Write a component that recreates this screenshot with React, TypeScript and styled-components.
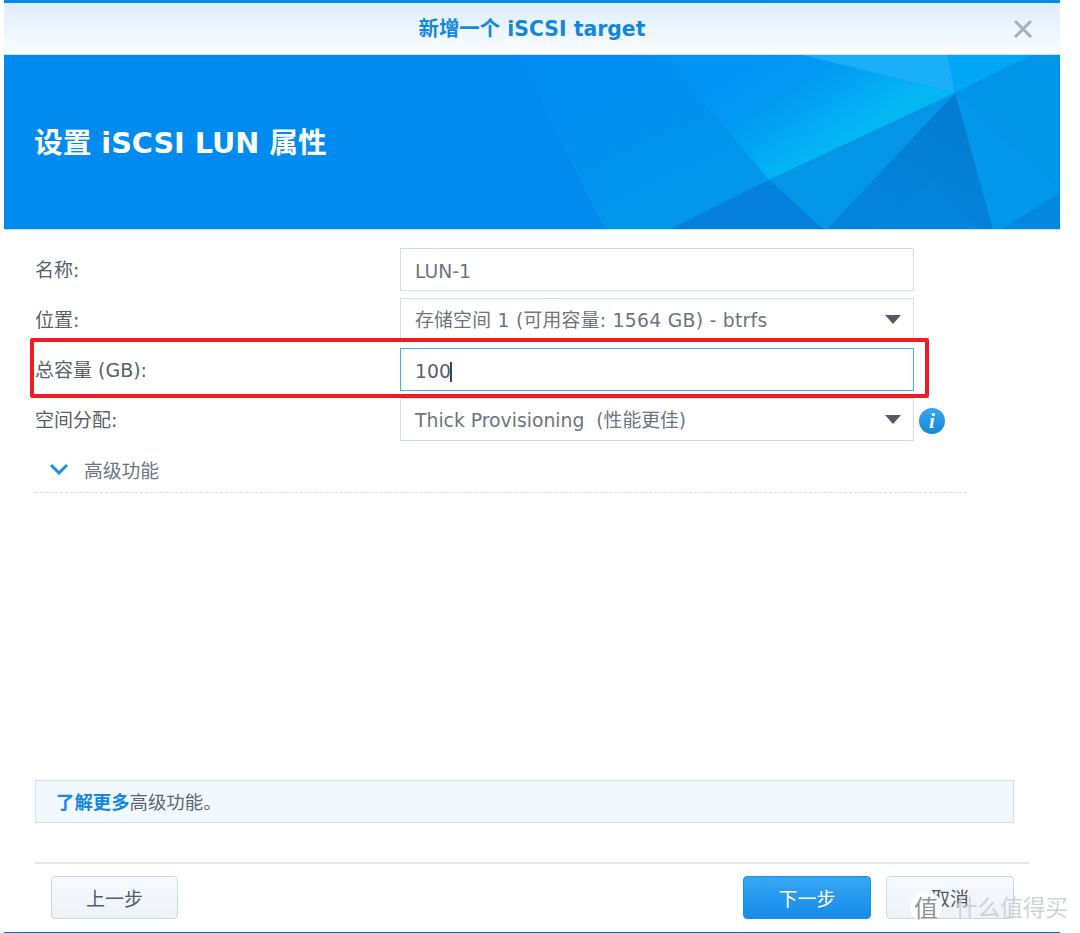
import { FC } from "react";
import styled, { createGlobalStyle } from "styled-components";

const GlobalStyle = createGlobalStyle`
  html, body {
    margin: 0;
    padding: 0;
    background: #ffffff;
  }
  body {
    font-family: "DejaVu Sans", "Noto Sans CJK SC", sans-serif;
  }
`;

const Page = styled.div`
  position: relative;
  width: 1080px;
  height: 933px;
  overflow: hidden;
  background: #ffffff;
`;

const Window = styled.div`
  box-sizing: border-box;
  width: 1056px;
  height: 933px;
  margin-left: 4px;
  display: flex;
  flex-direction: column;
  border-top: 3px solid #0a8ae6;
  border-bottom: 1px solid #2a5caa;
`;

const TitleBar = styled.header`
  flex: none;
  box-sizing: border-box;
  height: 52px;
  display: flex;
  align-items: center;
  justify-content: center;
  position: relative;
  padding-bottom: 3px;
  background: linear-gradient(#dcedfb, #fbfdff);
  border-bottom: 1px solid #cfe3f3;
`;

const WindowTitle = styled.h1`
  margin: 0;
  font-size: 20.4px;
  font-weight: 700;
  color: #1287dd;
`;

const CloseButton = styled.button`
  position: absolute;
  right: 27px;
  top: 16px;
  width: 20px;
  height: 20px;
  padding: 0;
  border: 0;
  background: none;
  display: block;
`;

const Banner = styled.section`
  flex: none;
  position: relative;
  box-sizing: border-box;
  height: 175px;
  display: flex;
  align-items: center;
  padding: 0 0 3px 30px;
  background: #018bef;
  border-bottom: 1px solid #bfe3fb;
  overflow: hidden;
`;

const BannerArt = styled.svg`
  position: absolute;
  right: 0;
  top: 0;
  width: 1056px;
  height: 174px;
`;

const BannerTitle = styled.h2`
  position: relative;
  margin: 0;
  font-size: 28.7px;
  font-weight: 700;
  color: #ffffff;
`;

const Body = styled.main`
  flex: 1;
  display: flex;
  flex-direction: column;
  padding: 18px 0 0 31px;
  min-height: 0;
`;

const Row = styled.div`
  display: flex;
  align-items: center;
  height: 43px;
  margin-bottom: 7px;
`;

const Label = styled.label`
  width: 365px;
  flex: none;
  padding-bottom: 2px;
  font-size: 19px;
  color: #56616c;
`;

const Field = styled.div<{ $focused?: boolean }>`
  box-sizing: border-box;
  width: 514px;
  height: 43px;
  flex: none;
  display: flex;
  align-items: center;
  justify-content: space-between;
  padding: 3px 12px 0 14px;
  border: 1px solid ${(p) => (p.$focused ? "#4caaf0" : "#d2dce6")};
  background: #ffffff;
  font-size: 18.8px;
  white-space: pre;
  color: ${(p) => (p.$focused ? "#56616c" : "#6b757f")};
`;

const Select = styled(Field)<{ $spaced?: boolean }>`
  padding: 0 12px 2px 14px;
  letter-spacing: ${(p) => (p.$spaced ? "0.27px" : "0")};
`;

const TextCaret = styled.span`
  display: inline-block;
  width: 2px;
  height: 20px;
  margin-left: -1px;
  vertical-align: -4px;
  background: #3d4650;
`;

const Caret = styled.span`
  width: 0;
  height: 0;
  margin-top: 2px;
  border-left: 8.5px solid transparent;
  border-right: 8.5px solid transparent;
  border-top: 9px solid #4f5b66;
`;

const InfoBadge = styled.span`
  width: 26px;
  height: 26px;
  margin: 3px 0 0 5px;
  flex: none;
  border-radius: 50%;
  display: flex;
  align-items: center;
  justify-content: center;
  background: linear-gradient(#3aa6ee, #1585dc);
  font-family: "Liberation Serif", serif;
  font-size: 21px;
  font-style: italic;
  font-weight: 700;
  color: #ffffff;
`;

const Advanced = styled.div`
  box-sizing: border-box;
  width: 932px;
  height: 45px;
  display: flex;
  align-items: center;
  gap: 15px;
  padding: 0 0 2px 14px;
  border-bottom: 1px dashed #d9e0e6;
  font-size: 18.8px;
  color: #6b757f;
`;

const Notice = styled.div`
  box-sizing: border-box;
  width: 979px;
  height: 43px;
  margin-top: auto;
  display: flex;
  align-items: center;
  padding: 0 0 2px 20px;
  border: 1px solid #cde4f6;
  background: #f1f8fe;
  font-size: 18.4px;
  color: #5c6670;
`;

const LearnMore = styled.a`
  font-weight: 700;
  color: #1287dd;
`;

const Footer = styled.footer`
  box-sizing: border-box;
  width: 994px;
  height: 70px;
  margin-top: 39px;
  display: flex;
  align-items: flex-start;
  padding: 12px 15px 0 16px;
  border-top: 2px solid #e6e6e6;
`;

const Button = styled.button<{ $primary?: boolean }>`
  box-sizing: border-box;
  width: 128px;
  height: 43px;
  padding: 0;
  margin-right: ${(p) => (p.$primary ? "15px" : "0")};
  border-radius: 4px;
  border: 1px solid ${(p) => (p.$primary ? "#1c8fe6" : "#ccd7e4")};
  background: ${(p) =>
    p.$primary
      ? "linear-gradient(#36a6f6, #158ce8)"
      : "linear-gradient(#f7fafd, #edf2f7)"};
  font-family: "Noto Sans CJK SC", sans-serif;
  font-size: 19px;
  color: ${(p) => (p.$primary ? "#ffffff" : "#4f5b66")};
`;

const BackButton = styled(Button)`
  width: 127px;
`;

const Spacer = styled.div`
  flex: 1;
`;

const Highlight = styled.div`
  position: absolute;
  left: 30px;
  top: 338px;
  width: 891px;
  height: 52px;
  border: 4px solid #ee1c25;
  border-radius: 2px;
`;

const Watermark = styled.div`
  position: absolute;
  left: 910px;
  top: 890px;
  display: flex;
  align-items: center;
  gap: 13px;
  font-family: "Noto Sans CJK SC", sans-serif;
  font-size: 22.6px;
  color: rgba(204, 208, 212, 0.95);
  white-space: nowrap;
`;

const WatermarkBadge = styled.span`
  width: 32px;
  height: 32px;
  border-radius: 50%;
  display: flex;
  align-items: center;
  justify-content: center;
  background: rgba(255, 255, 255, 0.92);
  font-size: 24px;
  color: #8f959b;
`;

const BannerPolygons: FC = () => (
  <BannerArt viewBox="0 0 1056 174" preserveAspectRatio="none">
    <defs>
      <linearGradient id="bright" gradientUnits="userSpaceOnUse" x1="720" y1="20" x2="785" y2="122">
        <stop offset="0" stopColor="#0192f4" />
        <stop offset="0.35" stopColor="#0199f3" />
        <stop offset="1" stopColor="#03b7f3" />
      </linearGradient>
      <linearGradient id="mid" gradientUnits="userSpaceOnUse" x1="600" y1="0" x2="680" y2="174">
        <stop offset="0" stopColor="#018ef3" />
        <stop offset="1" stopColor="#0297ea" />
      </linearGradient>
      <linearGradient id="dark" gradientUnits="userSpaceOnUse" x1="951" y1="38" x2="880" y2="174">
        <stop offset="0" stopColor="#037cd0" />
        <stop offset="1" stopColor="#0384dc" />
      </linearGradient>
    </defs>
    {/* coordinates are relative to the banner's top left corner */}
    <polygon points="515,0 659,0 765,125 666,174 601,174" fill="url(#mid)" />
    <polygon points="659,0 799,0 951,38 765,125" fill="url(#bright)" />
    <polygon points="799,0 944,0 951,38" fill="#1aaef6" />
    <polygon points="944,0 1029,0 951,38" fill="#00a6f8" />
    <polygon points="1029,0 1056,0 1056,135 951,38" fill="#0294e6" />
    <polygon points="951,38 1056,135 1056,138 998,174 989,174" fill="#0198ec" />
    <polygon points="1056,138 1056,174 998,174" fill="#0388dd" />
    <polygon points="951,38 989,174 823,174" fill="url(#dark)" />
    <polygon points="866,174 973,174 929,125" fill="#0388de" opacity="0.5" />
    <polygon points="951,38 823,174 819,174 765,125" fill="#0396e6" />
    <polygon points="765,125 819,174 666,174" fill="#0280dc" />
  </BannerArt>
);

const App: FC = () => (
  <Page>
    <GlobalStyle />
    <Window>
      <TitleBar>
        <WindowTitle>新增一个 iSCSI target</WindowTitle>
        <CloseButton aria-label="close">
          <svg width="20" height="20" viewBox="0 0 20 20">
            <path d="M2 2 L18 18 M18 2 L2 18" stroke="#a9afb5" strokeWidth="3" fill="none" />
          </svg>
        </CloseButton>
      </TitleBar>
      <Banner>
        <BannerPolygons />
        <BannerTitle>设置 iSCSI LUN 属性</BannerTitle>
      </Banner>
      <Body>
        <Row>
          <Label>名称:</Label>
          <Field>LUN-1</Field>
        </Row>
        <Row>
          <Label>位置:</Label>
          <Select $spaced>
            存储空间 1 (可用容量: 1564 GB) - btrfs
            <Caret />
          </Select>
        </Row>
        <Row>
          <Label>总容量 (GB):</Label>
          <Field $focused>
            <span>
              100
              <TextCaret />
            </span>
          </Field>
        </Row>
        <Row>
          <Label>空间分配:</Label>
          <Select>
            Thick Provisioning  (性能更佳)
            <Caret />
          </Select>
          <InfoBadge>i</InfoBadge>
        </Row>
        <Advanced>
          <svg width="20" height="12" viewBox="0 0 20 12">
            <path d="M2 2 L10 10 L18 2" stroke="#1b8fe2" strokeWidth="3" fill="none" />
          </svg>
          高级功能
        </Advanced>
        <Notice>
          <LearnMore>了解更多</LearnMore>高级功能。
        </Notice>
        <Footer>
          <BackButton>上一步</BackButton>
          <Spacer />
          <Button $primary>下一步</Button>
          <Button>取消</Button>
        </Footer>
      </Body>
    </Window>
    <Highlight />
    <Watermark>
      <WatermarkBadge>值</WatermarkBadge>
      什么值得买
    </Watermark>
  </Page>
);

export default App;
